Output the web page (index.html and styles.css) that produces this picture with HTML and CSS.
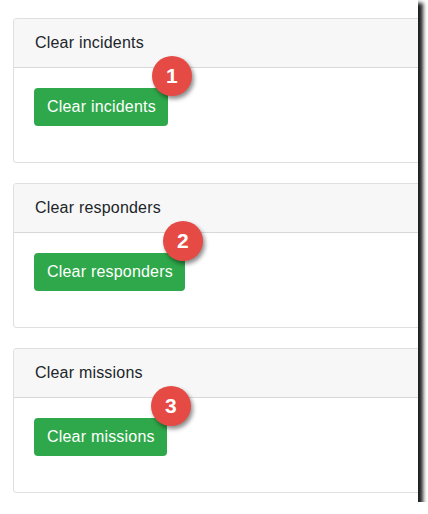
FILE: index.html
```html
<!DOCTYPE html>
<html>
<head>
<meta charset="utf-8">
<link rel="stylesheet" href="styles.css">
</head>
<body>
<div class="frame">
  <div class="stack">
    <section class="card">
      <div class="card-header">Clear incidents</div>
      <div class="card-body">
        <span class="btn-wrap"><button class="btn">Clear incidents</button><span class="badge">1</span></span>
      </div>
    </section>
    <section class="card">
      <div class="card-header">Clear responders</div>
      <div class="card-body">
        <span class="btn-wrap"><button class="btn">Clear responders</button><span class="badge badge-near">2</span></span>
      </div>
    </section>
    <section class="card">
      <div class="card-header">Clear missions</div>
      <div class="card-body">
        <span class="btn-wrap"><button class="btn">Clear missions</button><span class="badge">3</span></span>
      </div>
    </section>
  </div>
</div>
</body>
</html>
```
FILE: styles.css
```css
html, body {
  margin: 0;
  padding: 0;
  background: #ffffff;
}
body {
  font-family: "Liberation Sans", Arial, sans-serif;
  color: #212529;
}
.frame {
  width: 418px;
  height: 502px;
  background: #ffffff;
  overflow: hidden;
  box-shadow: 4px 4px 4px 1px rgba(0, 0, 0, 0.88);
  position: relative;
}
.stack {
  display: flex;
  flex-direction: column;
  gap: 20px;
  padding: 18px 0 0 13px;
}
.card {
  width: 440px;
  border: 1px solid rgba(0, 0, 0, 0.125);
  border-radius: 4px;
  background: #fff;
}
.card-header {
  padding: 12px 20px 12px 21px;
  line-height: 24px;
  font-size: 16px;
  letter-spacing: 0.2px;
  background: #f7f7f7;
  border-bottom: 1px solid rgba(0, 0, 0, 0.125);
  border-radius: 3px 3px 0 0;
}
.card-body {
  padding: 20px 20px 36px;
  display: flex;
}
.btn-wrap {
  position: relative;
  display: inline-flex;
}
.btn {
  font-family: "Liberation Sans", Arial, sans-serif;
  font-size: 16px;
  letter-spacing: 0.2px;
  line-height: 24px;
  padding: 7px 12px 7px 13px;
  color: #fff;
  background: #2ea84a;
  border: 0;
  border-radius: 4px;
  margin: 0;
}
.badge {
  position: absolute;
  top: -32px;
  right: -24px;
  width: 40px;
  height: 40px;
  border-radius: 50%;
  background: #e64a45;
  color: #fff;
  font-weight: bold;
  font-size: 21px;
  display: flex;
  align-items: center;
  justify-content: center;
  box-shadow: 2px 3px 4px rgba(0, 0, 0, 0.45);
}
.badge-near {
  right: -18px;
}
```
